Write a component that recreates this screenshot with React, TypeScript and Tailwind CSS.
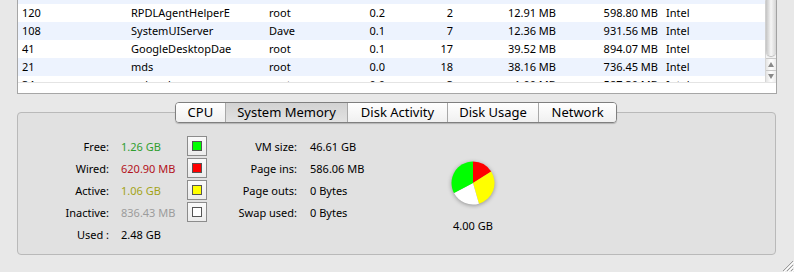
import React from 'react';

type Proc = {
  pid: string;
  name: string;
  user: string;
  cpu: string;
  threads: string;
  real: string;
  virt: string;
  kind: string;
};

const procs: Proc[] = [
  { pid: '120', name: 'RPDLAgentHelperE', user: 'root', cpu: '0.2', threads: '2', real: '12.91 MB', virt: '598.80 MB', kind: 'Intel' },
  { pid: '108', name: 'SystemUIServer', user: 'Dave', cpu: '0.1', threads: '7', real: '12.36 MB', virt: '931.56 MB', kind: 'Intel' },
  { pid: '41', name: 'GoogleDesktopDae', user: 'root', cpu: '0.1', threads: '17', real: '39.52 MB', virt: '894.07 MB', kind: 'Intel' },
  { pid: '21', name: 'mds', user: 'root', cpu: '0.0', threads: '18', real: '38.16 MB', virt: '736.45 MB', kind: 'Intel' },
];

const partial: Proc = { pid: '34', name: 'mdworker', user: 'root', cpu: '0.0', threads: '3', real: '1.00 MB', virt: '587.30 MB', kind: 'Intel' };

function Row({ p, blue }: { p: Proc; blue: boolean }) {
  return (
    <div className={`flex h-[18px] shrink-0 items-center text-[11px] text-black ${blue ? 'bg-[#edf3fe]' : 'bg-white'}`}>
      <div className="w-[113px] pl-[4px]">{p.pid}</div>
      <div className="w-[138px]">{p.name}</div>
      <div className="w-[76px]">{p.user}</div>
      <div className="w-[40px] text-right">{p.cpu}</div>
      <div className="w-[68px] text-right">{p.threads}</div>
      <div className="w-[103px] text-right">{p.real}</div>
      <div className="w-[102px] text-right">{p.virt}</div>
      <div className="pl-[8px]">{p.kind}</div>
    </div>
  );
}

const tabs = [
  { label: 'CPU', w: 'w-[49px]' },
  { label: 'System Memory', w: 'w-[123px]', active: true },
  { label: 'Disk Activity', w: 'w-[100px]' },
  { label: 'Disk Usage', w: 'w-[92px]' },
  { label: 'Network', w: 'w-[78px]' },
];

const memRows = [
  { label: 'Free:', value: '1.26 GB', color: 'text-[#2f9e2f]', swatch: 'bg-[#00ff00]' },
  { label: 'Wired:', value: '620.90 MB', color: 'text-[#b3121b]', swatch: 'bg-[#ff0000]' },
  { label: 'Active:', value: '1.06 GB', color: 'text-[#a3a316]', swatch: 'bg-[#ffff00]' },
  { label: 'Inactive:', value: '836.43 MB', color: 'text-[#9c9c9c]', swatch: 'bg-white' },
  { label: 'Used :', value: '2.48 GB', color: 'text-black', swatch: '' },
];

const vmRows = [
  { label: 'VM size:', value: '46.61 GB' },
  { label: 'Page ins:', value: '586.06 MB' },
  { label: 'Page outs:', value: '0 Bytes' },
  { label: 'Swap used:', value: '0 Bytes' },
];

function Pie() {
  return (
    <svg width="44" height="44" viewBox="0 0 44 44" className="drop-shadow-[0_1px_2px_rgba(0,0,0,0.35)]">
      <path d="M22 22 L22 0.5 A21.5 21.5 0 0 1 40.23 10.6 Z" fill="#ff0000" />
      <path d="M22 22 L40.23 10.6 A21.5 21.5 0 0 1 27.93 42.67 Z" fill="#ffff00" />
      <path d="M22 22 L27.93 42.67 A21.5 21.5 0 0 1 3.02 32.09 Z" fill="#ffffff" />
      <path d="M22 22 L3.02 32.09 A21.5 21.5 0 0 1 22 0.5 Z" fill="#00ff00" />
    </svg>
  );
}

export default function App() {
  return (
    <div
      className="relative h-[272px] w-[794px] overflow-hidden bg-[#e8e8e8]"
      style={{ fontFamily: '"Lucida Grande", "Noto Sans", sans-serif' }}
    >
      {/* process table */}
      <div className="ml-[17px] flex h-[94px] w-[760px] flex-col border-x border-b border-[#a6a6a6] bg-white">
        <div className="flex h-[82px]">
          <div className="flex w-[747px] flex-col overflow-hidden">
            <div className="h-[4px] shrink-0 bg-[#edf3fe]" />
            {procs.map((p, i) => (
              <Row key={p.pid} p={p} blue={i % 2 === 1} />
            ))}
            <div className="h-[6px] shrink-0 overflow-hidden">
              <Row p={partial} blue={false} />
            </div>
          </div>
          <div className="flex w-[11px] flex-col border-l border-[#d6d6d6] bg-[#f4f4f4]">
            <div className="h-[56px] rounded-b-[6px] bg-gradient-to-r from-[#c4c4c4] via-[#f6f6f6] to-[#d4d4d4] shadow-[0_1px_1px_rgba(0,0,0,0.25)]" />
            <div className="flex-1" />
            <div className="flex h-[12px] items-center justify-center border-t border-[#c8c8c8] bg-gradient-to-r from-[#e4e4e4] via-white to-[#ececec]">
              <svg width="6" height="5" viewBox="0 0 6 5"><path d="M3 0 L6 5 L0 5 Z" fill="#8a8a8a" /></svg>
            </div>
            <div className="flex h-[12px] items-center justify-center border-t border-[#c8c8c8] bg-gradient-to-r from-[#e4e4e4] via-white to-[#ececec]">
              <svg width="6" height="5" viewBox="0 0 6 5"><path d="M0 0 L6 0 L3 5 Z" fill="#8a8a8a" /></svg>
            </div>
          </div>
        </div>
        <div className="flex-1 border-t border-[#e4e4e4] bg-white" />
      </div>

      {/* segmented tabs */}
      <div className="relative z-10 ml-[175px] mt-[8px] flex h-[21px] w-[442px] overflow-hidden rounded-[4px] border border-[#7f7f7f] shadow-[0_1px_1px_rgba(0,0,0,0.2)]">
        {tabs.map((t, i) => (
          <div
            key={t.label}
            className={`flex ${t.w} items-center justify-center text-[13px] text-black ${i > 0 ? 'border-l border-[#a8a8a8]' : ''} ${
              t.active ? 'bg-gradient-to-b from-[#d2d2d2] to-[#e2e2e2]' : 'bg-gradient-to-b from-white to-[#f0f0f0]'
            }`}
          >
            {t.label}
          </div>
        ))}
      </div>

      {/* group box */}
      <div className="-mt-[11px] ml-[17px] h-[143px] w-[759px] rounded-[4px] border border-[#b9b9b9] bg-[#e1e1e1]">
        <div className="flex pt-[23px] text-[11px] text-black">
          <div className="flex w-[91px] flex-col">
            {memRows.map((r) => (
              <div key={r.label} className="flex h-[22px] items-center justify-end">{r.label}</div>
            ))}
          </div>
          <div className="ml-[12px] flex w-[66px] flex-col">
            {memRows.map((r) => (
              <div key={r.label} className={`flex h-[22px] items-center ${r.color}`}>{r.value}</div>
            ))}
          </div>
          <div className="flex w-[20px] flex-col">
            {memRows.slice(0, 4).map((r) => (
              <div key={r.label} className="flex h-[22px] items-start">
                <div className="flex h-[20px] w-[20px] items-center justify-center border border-[#8c8c8c] bg-gradient-to-b from-[#fafafa] to-[#ececec]">
                  <div className={`h-[10px] w-[10px] border border-[#555] ${r.swatch}`} />
                </div>
              </div>
            ))}
          </div>
          <div className="flex w-[90px] flex-col">
            {vmRows.map((r) => (
              <div key={r.label} className="flex h-[22px] items-center justify-end">{r.label}</div>
            ))}
          </div>
          <div className="ml-[13px] flex w-[123px] flex-col">
            {vmRows.map((r) => (
              <div key={r.label} className="flex h-[22px] items-center">{r.value}</div>
            ))}
          </div>
          <div className="flex w-[80px] flex-col items-center pt-[25px]">
            <Pie />
            <div className="mt-[13px] text-[11px]">4.00 GB</div>
          </div>
        </div>
      </div>

      {/* resize grip */}
      <svg className="absolute bottom-0 right-0" width="12" height="12" viewBox="0 0 12 12">
        <path d="M11 1 L1 11 M11 5 L5 11 M11 9 L9 11" stroke="#9a9a9a" strokeWidth="1" />
        <path d="M12 2 L2 12 M12 6 L6 12 M12 10 L10 12" stroke="#ffffff" strokeWidth="1" />
      </svg>
    </div>
  );
}
